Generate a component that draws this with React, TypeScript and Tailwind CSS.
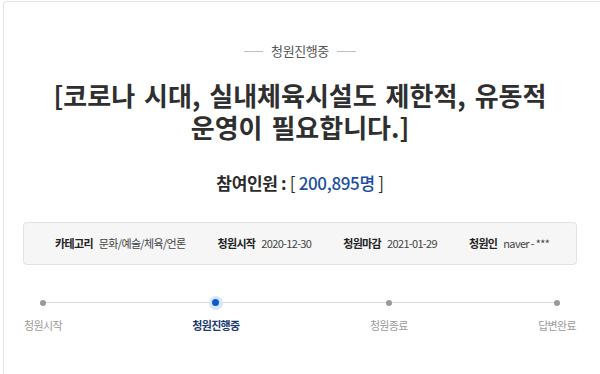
import React from "react";

const KR = { fontFamily: '"Noto Sans CJK KR", "Noto Sans", sans-serif' };

const META = [
  { label: "카테고리", value: "문화/예술/체육/언론" },
  { label: "청원시작", value: "2020-12-30" },
  { label: "청원마감", value: "2021-01-29" },
  { label: "청원인", value: "naver - ***" },
];

const STEPS = ["청원시작", "청원진행중", "청원종료", "답변완료"];
const ACTIVE = 1;

export default function App() {
  return (
    <div className="w-[600px] h-[374px] overflow-hidden bg-white pl-[3px] pt-[1px]" style={KR}>
      <div className="w-[597px] h-[390px] border-t border-l border-[#e3e3e3] rounded-tl-[4px] pr-[4px] flex flex-col items-center">
        <div className="mt-[40px] flex items-center gap-[8px] text-[13px] leading-[18px] text-[#555] tracking-[-0.03em]">
          <span className="w-[19px] h-px bg-[#bdbdbd]" />
          <span>청원진행중</span>
          <span className="w-[19px] h-px bg-[#bdbdbd]" />
        </div>

        <h1 className="mt-[19px] whitespace-nowrap text-center text-[26px] leading-[32px] font-bold text-[#2f2f2f] [word-spacing:3px]">
          [코로나 시대, 실내체육시설도 제한적, 유동적
          <br />
          운영이 필요합니다.]
        </h1>

        <div className="mt-[29px] whitespace-nowrap text-[17px] leading-[22px] font-bold text-[#2b2b2b] tracking-[-0.02em]">
          참여인원 : <span className="font-normal">[ </span>
          <span className="text-[#1c4f9f] font-medium">200,895명</span>
          <span className="font-normal"> ]</span>
        </div>

        <div className="mt-[28px] w-[554px] h-[43px] rounded-[4px] border border-[#e2e2e2] bg-[#f6f6f6] flex items-center gap-[32px] px-[31px] text-[11px] tracking-[-0.06em] text-[#444] whitespace-nowrap">
          {META.map((m) => (
            <div key={m.label} className="flex flex-none items-center gap-[6px]">
              <span className="font-bold text-[#222]">{m.label}</span>
              <span>{m.value}</span>
            </div>
          ))}
        </div>

        <div className="mt-[32px] w-[552px] relative">
          <div className="absolute left-[17px] right-[18px] top-[5px] h-px bg-[#d9d9d9]" />
          <div className="relative flex justify-between">
            {STEPS.map((s, i) => (
              <div key={s} className="flex flex-col items-center">
                <div className="h-[11px] flex items-center justify-center">
                  {i === ACTIVE ? (
                    <span className="w-[14px] h-[14px] rounded-full bg-[#d7e8fc] flex items-center justify-center">
                      <span className="w-[7px] h-[7px] rounded-full bg-[#0f5ad0]" />
                    </span>
                  ) : (
                    <span className="w-[6px] h-[6px] rounded-full bg-[#9a9a9a]" />
                  )}
                </div>
                <span
                  className={
                    i === ACTIVE
                      ? "mt-[9px] text-[11px] leading-[16px] font-bold text-[#1d3b6e] tracking-[-0.06em]"
                      : "mt-[9px] text-[11px] leading-[16px] text-[#9a9a9a] tracking-[-0.06em]"
                  }
                >
                  {s}
                </span>
              </div>
            ))}
          </div>
        </div>
      </div>
    </div>
  );
}
